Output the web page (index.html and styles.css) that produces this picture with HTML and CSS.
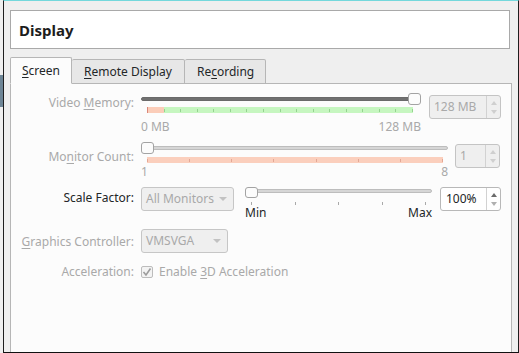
FILE: index.html
```html
<!DOCTYPE html>
<html lang="en">

<head>
    <meta charset="UTF-8">
    <title>Display</title>
    <link rel="stylesheet" href="styles.css">
</head>

<body>
    <div class="window">
        <div class="header">Display</div>

        <div class="tabs">
            <div class="tab active"><u>S</u>creen</div>
            <div class="tab tab-remote"><u>R</u>emote Display</div>
            <div class="tab tab-recording">Re<u>c</u>ording</div>
        </div>

        <div class="panel">
            <!-- Video memory -->
            <div class="row row-memory">
                <div class="label off">Video <u>M</u>emory:</div>
                <div class="slider slider-memory">
                    <div class="groove-area">
                        <div class="groove dark"></div>
                        <div class="handle" style="left: 267px"></div>
                    </div>
                    <div class="bar bar-memory">
                        <div class="ticks">
                            <i class="first"></i><i></i><i></i><i></i><i></i><i></i><i></i><i></i><i></i>
                            <i></i><i></i><i></i><i></i><i></i><i></i><i></i><i></i>
                        </div>
                    </div>
                    <div class="scale off"><span>0 MB</span><span>128 MB</span></div>
                </div>
                <div class="spin spin-memory off">
                    <span class="spin-text">128 MB</span>
                    <span class="spin-buttons"><b class="up"></b><b class="down"></b></span>
                </div>
            </div>

            <!-- Monitor count -->
            <div class="row row-monitors">
                <div class="label off">Mo<u>n</u>itor Count:</div>
                <div class="slider slider-monitors">
                    <div class="groove-area">
                        <div class="groove"></div>
                        <div class="handle" style="left: 0px"></div>
                    </div>
                    <div class="bar bar-monitors">
                        <div class="ticks">
                            <i></i><i></i><i></i><i></i><i></i><i></i><i></i><i></i>
                        </div>
                    </div>
                    <div class="scale off"><span>1</span><span>8</span></div>
                </div>
                <div class="spin spin-monitors off">
                    <span class="spin-text">1</span>
                    <span class="spin-buttons"><b class="up"></b><b class="down"></b></span>
                </div>
            </div>

            <!-- Scale factor -->
            <div class="row row-scale">
                <div class="label">Scale Factor:</div>
                <div class="combo combo-monitors off">
                    <span>All Monitors</span><b class="arrow"></b>
                </div>
                <div class="slider slider-scale">
                    <div class="groove-area">
                        <div class="groove"></div>
                        <div class="handle" style="left: 0px"></div>
                    </div>
                    <div class="marks"><i></i><i></i><i></i><i></i><i></i></div>
                    <div class="scale"><span>Min</span><span>Max</span></div>
                </div>
                <div class="spin spin-scale">
                    <span class="spin-text">100%</span>
                    <span class="spin-buttons"><b class="up"></b><b class="down"></b></span>
                </div>
            </div>

            <!-- Graphics controller -->
            <div class="row row-controller">
                <div class="label off"><u>G</u>raphics Controller:</div>
                <div class="combo combo-controller off">
                    <span>VMSVGA</span><b class="arrow"></b>
                </div>
            </div>

            <!-- Acceleration -->
            <div class="row row-accel">
                <div class="label off">Acceleration:</div>
                <div class="check">
                    <svg width="10" height="10" viewBox="0 0 10 10">
                        <polyline points="1.5,5 4,8 8.5,1.5" fill="none" stroke="#9c9c9c" stroke-width="1.6" />
                    </svg>
                </div>
                <div class="check-text off">Enable <u>3</u>D Acceleration</div>
            </div>
        </div>
    </div>
</body>

</html>
```

FILE: styles.css
```css
body {
    margin: 0;
    background-color: #efefef;
    font-family: "Noto Sans", "Open Sans", sans-serif;
    font-size: 12px;
    color: #232627;
    overflow: hidden;
}

.window {
    position: relative;
    box-sizing: border-box;
    width: 516px;
    height: 353px;
    margin-left: 3px;
    border-top: 1px solid #74d8dc;
    border-left: 1px solid #1e1e1e;
    border-right: 1px solid #1e1e1e;
    border-bottom: 1px solid #111;
    overflow: hidden;
}

/* little blue strip of the window behind */
body::before {
    content: "";
    position: absolute;
    left: 0;
    top: 75px;
    width: 3px;
    height: 32px;
    background-color: #6d8596;
}

.header {
    box-sizing: border-box;
    width: 500px;
    height: 39px;
    margin: 9px 0 0 6px;
    padding-left: 8px;
    display: flex;
    align-items: center;
    background-color: #fff;
    border: 1px solid #a9a9a9;
    font-size: 15px;
    font-weight: bold;
    color: #1d1d1d;
}

.tabs {
    display: flex;
    align-items: flex-end;
    margin: 8px 0 0 6px;
    height: 27px;
    position: relative;
    z-index: 1;
    margin-bottom: -1px;
}

.tab {
    box-sizing: border-box;
    height: 25px;
    padding-left: 12px;
    display: flex;
    align-items: center;
    background-color: #e7e7e7;
    border: 1px solid #b6b6b6;
    border-left: none;
    border-radius: 2px 2px 0 0;
    color: #232627;
}

.tab.active {
    width: 62px;
    height: 27px;
    padding-left: 11px;
    background-color: #fcfcfc;
    border-left: 1px solid #b6b6b6;
    border-bottom: 1px solid #fcfcfc;
}

.tab-remote { width: 113px; }
.tab-recording { width: 81px; }

u {
    text-decoration: underline;
    text-underline-offset: 2px;
}

.panel {
    box-sizing: border-box;
    width: 502px;
    height: 300px;
    margin-left: 6px;
    padding-top: 9px;
    background-color: #fcfcfc;
    border: 1px solid #b6b6b6;
}

.row {
    display: flex;
    align-items: flex-start;
    line-height: 16px;
}

.label {
    width: 123px;
    margin-right: 7px;
    text-align: right;
    white-space: nowrap;
}

.off {
    color: #a9a9a9;
}

.row-memory { height: 49px; }
.row-memory .label { margin-top: 2px; }

.row-monitors { height: 45px; }
.row-monitors .label { margin-top: 7px; }

.row-scale { height: 42px; }
.row-scale .label { margin-top: 3px; }

.row-controller { height: 36px; }
.row-controller .label { margin-top: 5px; }

.row-accel {
    height: 16px;
    align-items: center;
    margin-top: -1px;
}

/* sliders */
.slider {
    display: flex;
    flex-direction: column;
}

.slider-memory { width: 280px; }
.slider-monitors { width: 307px; }
.slider-scale { width: 187px; margin-left: 11px; }

.groove-area {
    position: relative;
    height: 12px;
}

.groove {
    box-sizing: border-box;
    height: 4px;
    margin-top: 4px;
    border-radius: 2px;
    background-color: #d6d6d6;
    border: 1px solid #bdbdbd;
}

.groove.dark {
    background-color: #707070;
    border-color: #6a6a6a;
}

.slider-scale .groove-area { height: 11px; }
.slider-scale .groove { margin-top: 2px; }

.handle {
    position: absolute;
    top: 0;
    box-sizing: border-box;
    width: 13px;
    height: 12px;
    background-color: #fcfcfc;
    border: 1px solid #a3a3a3;
    border-radius: 3px;
}

.slider-scale .handle { height: 11px; }

.bar {
    height: 6px;
    margin-left: 6px;
}

.bar-memory {
    width: 266px;
    margin-top: 2px;
    background: linear-gradient(to right, #fbcdb9 17px, #c6f6c0 17px);
}

.bar-monitors {
    width: 296px;
    margin-top: 3px;
    background-color: #fbcfbd;
}

.ticks {
    height: 100%;
    display: flex;
    justify-content: space-between;
    align-items: center;
}

.ticks i {
    width: 1px;
    height: 3px;
    background-color: #95d390;
}

.ticks i.first {
    height: 6px;
    background-color: #d9877a;
}

.bar-monitors .ticks i {
    background-color: #e3a896;
}

.marks {
    display: flex;
    justify-content: space-between;
    width: 175px;
    height: 3px;
    margin: 4px 0 0 6px;
}

.marks i {
    width: 1px;
    background-color: #a9a9a9;
}

.scale {
    display: flex;
    justify-content: space-between;
}

.slider-memory .scale { margin-top: 6px; }
.slider-monitors .scale { margin-top: 1px; }

/* spin boxes */
.spin {
    box-sizing: border-box;
    height: 24px;
    display: flex;
    border: 1px solid #c4c4c4;
    border-radius: 3px;
    background-color: #efefef;
}

.spin-text {
    flex: 1;
    display: flex;
    align-items: center;
    padding-left: 4px;
}

.spin-buttons {
    width: 13px;
    border-left: 1px solid #d2d2d2;
    display: flex;
    flex-direction: column;
    align-items: center;
    justify-content: center;
    gap: 5px;
}

.spin-buttons b {
    width: 0;
    height: 0;
    border-left: 3px solid transparent;
    border-right: 3px solid transparent;
}

.spin-buttons .up { border-bottom: 4px solid #cfcfcf; }
.spin-buttons .down { border-top: 4px solid #cfcfcf; }

.spin-memory { width: 72px; margin: 2px 0 0 8px; }
.spin-monitors { width: 45px; margin: 2px 0 0 7px; }

.spin-scale {
    width: 61px;
    margin-left: 8px;
    background-color: #fff;
    border-color: #b8b8b8;
}

.spin-scale .spin-text { padding-left: 5px; }
.spin-scale .up { border-bottom-color: #6b6b6b; }
.spin-scale .down { border-top-color: #b0b0b0; }

/* combo boxes */
.combo {
    box-sizing: border-box;
    height: 24px;
    display: flex;
    align-items: center;
    justify-content: space-between;
    padding: 0 6px 0 4px;
    border: 1px solid #c6c6c6;
    border-radius: 3px;
    background-color: #efefef;
}

.combo .arrow {
    width: 0;
    height: 0;
    border-left: 4px solid transparent;
    border-right: 4px solid transparent;
    border-top: 4px solid #c2c2c2;
}

.combo-monitors { width: 93px; }
.combo-controller { width: 87px; }

.check {
    box-sizing: border-box;
    width: 12px;
    height: 12px;
    border: 1px solid #bcbcbc;
    border-radius: 2px;
    background-color: #f3f3f3;
    display: flex;
    align-items: center;
    justify-content: center;
}

.check-text {
    margin-left: 6px;
}
```
